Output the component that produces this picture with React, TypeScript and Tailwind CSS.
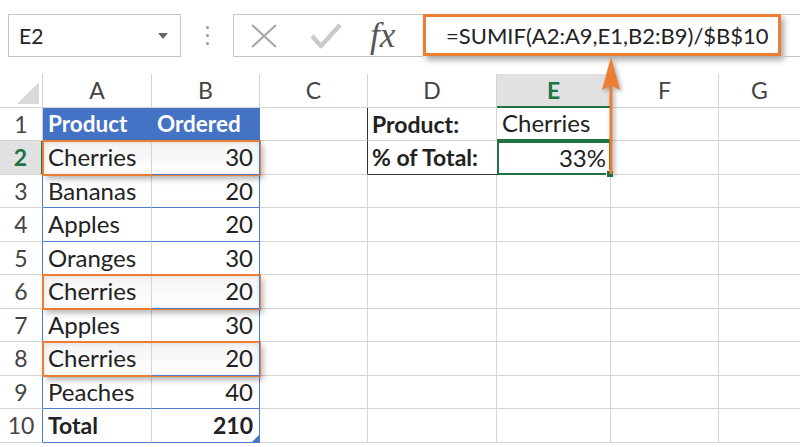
import React from 'react';

const GRAY = 'border-[#d4d4d4]';

type DataRow = { n: number; a: string; b: string; bold?: boolean; hl?: boolean };

const dataRows: DataRow[] = [
  { n: 2, a: 'Cherries', b: '30', hl: true },
  { n: 3, a: 'Bananas', b: '20' },
  { n: 4, a: 'Apples', b: '20' },
  { n: 5, a: 'Oranges', b: '30' },
  { n: 6, a: 'Cherries', b: '20', hl: true },
  { n: 7, a: 'Apples', b: '30' },
  { n: 8, a: 'Cherries', b: '20', hl: true },
  { n: 9, a: 'Peaches', b: '40' },
  { n: 10, a: 'Total', b: '210', bold: true },
];

function Toolbar() {
  return (
    <div className="flex h-[74px] items-start pl-[8px] pt-[14px]">
      <div className="flex h-[43px] w-[173px] items-center justify-between border border-[#c6c6c6] pl-[10px] pr-[12px]">
        <span className="text-[21px] text-[#222]">E2</span>
        <span className="h-0 w-0 border-x-[5px] border-t-[6px] border-x-transparent border-t-[#666]" />
      </div>
      <div className="flex h-[43px] w-[52px] flex-col items-center justify-center gap-[5px]">
        <span className="h-[3px] w-[3px] rounded-full bg-[#9a9a9a]" />
        <span className="h-[3px] w-[3px] rounded-full bg-[#9a9a9a]" />
        <span className="h-[3px] w-[3px] rounded-full bg-[#9a9a9a]" />
      </div>
      <div className="flex h-[43px] w-[190px] items-center border border-r-0 border-[#c6c6c6]">
        <svg className="ml-[16px]" width="28" height="24" viewBox="0 0 28 24">
          <path d="M2 1 L26 23 M26 1 L2 23" stroke="#a8a8a8" strokeWidth="2.2" fill="none" />
        </svg>
        <svg className="ml-[32px]" width="32" height="26" viewBox="0 0 32 26">
          <path d="M2 13 L11 23 L30 2" stroke="#cacaca" strokeWidth="4.5" fill="none" strokeLinejoin="round" />
        </svg>
        <span className="ml-[28px] font-['Liberation_Serif',serif] text-[35px] italic leading-none text-[#555]">
          fx
        </span>
      </div>
      <div className="flex h-[42px] w-[358px] items-center border-[3px] border-[#ed7d31] pl-[20px] shadow-[3px_4px_6px_rgba(0,0,0,0.35)]">
        <span className="text-[22px] text-[#222]">=SUMIF(A2:A9,E1,B2:B9)/$B$10</span>
      </div>
      <div className="h-[43px] flex-1 border-y border-[#c6c6c6]" />
    </div>
  );
}

function HeaderRow() {
  const cols = [
    { l: 'A', w: 'w-[109px]' },
    { l: 'B', w: 'w-[108px]' },
    { l: 'C', w: 'w-[108px]' },
    { l: 'D', w: 'w-[129px]' },
    { l: 'E', w: 'w-[114px]' },
    { l: 'F', w: 'w-[108px]' },
  ];
  return (
    <div className="flex h-[33.5px]">
      <div className={`relative w-[43px] shrink-0 border-r border-b ${GRAY}`}>
        <svg className="absolute right-[3px] bottom-[3px]" width="22" height="22" viewBox="0 0 22 22">
          <polygon points="22,0 22,22 0,22" fill="#d9d9d9" />
        </svg>
      </div>
      {cols.map((c) =>
        c.l === 'E' ? (
          <div
            key={c.l}
            className={`${c.w} flex shrink-0 items-center justify-center border-r ${GRAY} border-b-2 border-b-[#217346] bg-[#e1e1e1] text-[23px] font-bold text-[#217346]`}
          >
            {c.l}
          </div>
        ) : (
          <div
            key={c.l}
            className={`${c.w} flex shrink-0 items-center justify-center border-r border-b ${GRAY} text-[23px] text-[#444]`}
          >
            {c.l}
          </div>
        ),
      )}
      <div className={`flex flex-1 items-center justify-center border-b ${GRAY} text-[23px] text-[#444]`}>G</div>
    </div>
  );
}

function Row1() {
  return (
    <div className="flex h-[33.5px]">
      <div className={`flex w-[43px] shrink-0 items-center justify-center border-r border-b ${GRAY} text-[23px] text-[#444]`}>
        1
      </div>
      <div className="flex w-[217px] shrink-0 bg-[#4472c4] text-[22.5px] font-bold text-white">
        <div className="flex w-[109px] items-center pl-[5px]">Product</div>
        <div className="flex w-[108px] items-center pl-[5px]">Ordered</div>
      </div>
      <div className={`w-[108px] shrink-0 border-r border-r-[#333] border-b ${GRAY}`} />
      <div className={`flex w-[129px] shrink-0 items-center border-r border-b ${GRAY} pl-[4px] text-[23px] font-bold text-[#222]`}>
        Product:
      </div>
      <div className={`flex w-[114px] shrink-0 items-center border-r ${GRAY} border-b-2 border-b-[#217346] pl-[5px] text-[24px] text-[#222]`}>
        Cherries
      </div>
      <div className={`w-[108px] shrink-0 border-r border-b ${GRAY}`} />
      <div className={`flex-1 border-b ${GRAY}`} />
    </div>
  );
}

function SheetRow({ r }: { r: DataRow }) {
  const sel = r.n === 2;
  return (
    <div className="flex h-[33.5px]">
      <div
        className={`flex w-[43px] shrink-0 items-center justify-center border-b ${GRAY} text-[23px] ${
          sel ? 'border-r-2 border-r-[#217346] bg-[#e1e1e1] font-bold text-[#217346]' : 'border-r border-r-[#4f7ccc] text-[#444]'
        }`}
      >
        {r.n}
      </div>
      <div
        className={`relative flex w-[217px] shrink-0 text-[#222] ${r.bold ? 'text-[23px] font-bold' : 'text-[24px]'} ${
          r.hl
            ? 'z-10 bg-gradient-to-b from-[#f3f3f3] to-white outline-2 -outline-offset-1 outline-[#ed7d31] shadow-[inset_0_0_6px_rgba(0,0,0,0.12),3px_4px_6px_rgba(0,0,0,0.3)]'
            : ''
        }`}
      >
        <div className={`flex w-[109px] items-center border-r ${GRAY} border-b border-b-[#4f7ccc] pl-[5px]`}>{r.a}</div>
        <div className="relative flex w-[108px] items-center justify-end border-r border-b border-[#4f7ccc] pr-[6px]">
          {r.b}
          {r.n === 10 && (
            <svg className="absolute right-0 bottom-0" width="7" height="7" viewBox="0 0 7 7">
              <polygon points="7,0 7,7 0,7" fill="#4472c4" />
            </svg>
          )}
        </div>
      </div>
      <div className={`w-[108px] shrink-0 border-r border-b ${GRAY} ${sel ? 'border-r-[#333]' : ''}`} />
      {sel ? (
        <div className="flex w-[129px] shrink-0 items-center border-b border-b-[#333] pl-[4px] text-[23px] font-bold text-[#222]">
          % of Total:
        </div>
      ) : (
        <div className={`w-[129px] shrink-0 border-r border-b ${GRAY}`} />
      )}
      {sel ? (
        <div className="relative flex w-[114px] shrink-0 items-center justify-end border-2 border-[#217346] pr-[3px] text-[24px] text-[#222]">
          33%
          <span className="absolute -right-[5px] -bottom-[5px] h-[8px] w-[8px] border border-white bg-[#217346]" />
        </div>
      ) : (
        <div className={`w-[114px] shrink-0 border-r border-b ${GRAY}`} />
      )}
      <div className={`w-[108px] shrink-0 border-r border-b ${GRAY}`} />
      <div className={`flex-1 border-b ${GRAY}`} />
    </div>
  );
}

export default function App() {
  return (
    <div className="relative h-[447px] w-[800px] overflow-hidden bg-white font-['Lato',sans-serif]">
      <Toolbar />
      <HeaderRow />
      <Row1 />
      {dataRows.map((r) => (
        <SheetRow key={r.n} r={r} />
      ))}
      <svg
        className="absolute top-[55px] left-[596px] drop-shadow-[2px_2px_2px_rgba(0,0,0,0.35)]"
        width="30"
        height="122"
        viewBox="0 0 30 122"
      >
        <line x1="15" y1="28" x2="15" y2="119" stroke="#ed7d31" strokeWidth="3" />
        <polygon points="15,2 24,35 15,30 6,35" fill="#ed7d31" />
      </svg>
    </div>
  );
}
